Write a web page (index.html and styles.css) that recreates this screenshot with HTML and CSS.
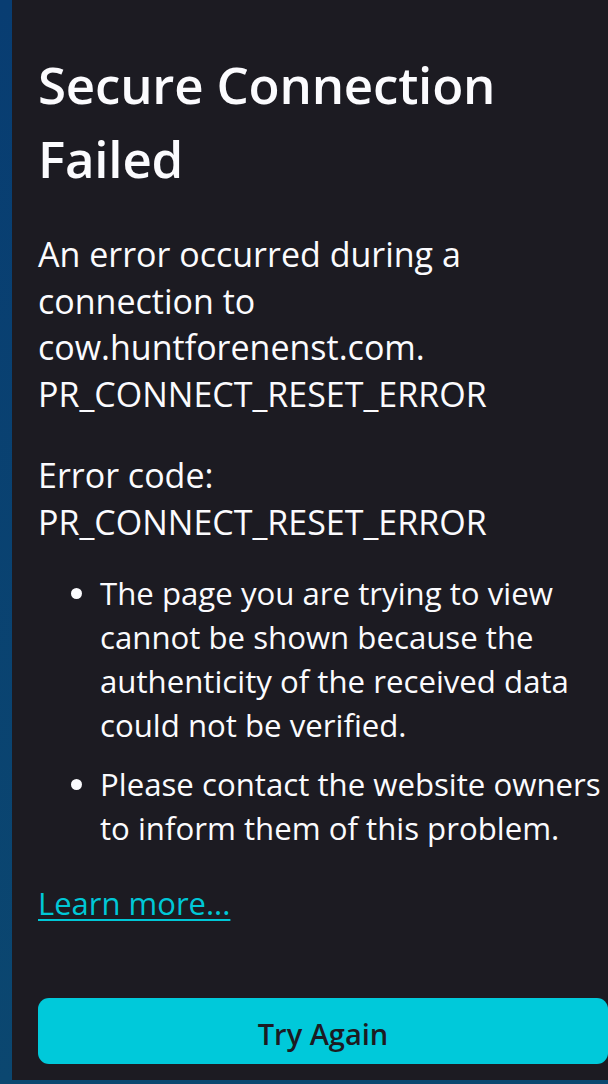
FILE: index.html
```html
<!DOCTYPE html>
<html lang="en">
<head>
<meta charset="utf-8">
<title>Secure Connection Failed</title>
<link rel="stylesheet" href="styles.css">
</head>
<body>
<main class="panel">
  <div class="content">
    <h1 class="title">Secure Connection Failed</h1>
    <p class="desc">An error occurred during a connection to cow.huntforenenst.com. PR_CONNECT_RESET_ERROR</p>
    <p class="code">Error code: PR_CONNECT_RESET_ERROR</p>
    <ul class="reasons">
      <li>The page you are trying to view cannot be shown because the authenticity of the received data could not be verified.</li>
      <li>Please contact the website owners to inform them of this problem.</li>
    </ul>
    <a class="learn" href="#">Learn more...</a>
    <button class="retry" type="button">Try Again</button>
  </div>
</main>
</body>
</html>
```

FILE: styles.css
```css
* { box-sizing: border-box; }
html, body { margin: 0; padding: 0; }
body {
  width: 608px;
  height: 1084px;
  overflow: hidden;
  background: linear-gradient(180deg, #083d72 0%, #0b4770 100%);
  font-family: "Open Sans", "Noto Sans", sans-serif;
  color: #fbfbfe;
}
.panel {
  margin-left: 12px;
  height: 1080px;
  background: #1c1b22;
  padding-left: 26px;
}
.content {
  width: 570px;
  display: flex;
  flex-direction: column;
  align-items: flex-start;
  padding-top: 48px;
}
.title {
  margin: 0;
  font-size: 51px;
  font-weight: 600;
  line-height: 73.5px;
  letter-spacing: -0.2px;
}
.desc, .code {
  margin: 0;
  font-size: 34px;
  line-height: 46.5px;
}
.desc { margin-top: 36px; }
.code { margin-top: 35px; }
.reasons {
  width: 584px;
  margin: 26px 0 0;
  padding-left: 62px;
  font-size: 31.2px;
  line-height: 44px;
}
.reasons li { margin-bottom: 15px; }
.reasons li:last-child { margin-bottom: 0; }
.learn {
  margin-top: 30px;
  font-size: 31px;
  line-height: 46px;
  color: #00c8d7;
  text-decoration: underline;
  text-decoration-thickness: 2px;
  text-underline-offset: 4px;
}
.retry {
  margin-top: 72px;
  width: 570px;
  height: 66px;
  padding: 4px 0 0;
  border: 0;
  border-radius: 11px;
  background: #00c9da;
  color: #1c1b22;
  font-family: "Open Sans", "Noto Sans", sans-serif;
  font-size: 29px;
  font-weight: 600;
}
```
